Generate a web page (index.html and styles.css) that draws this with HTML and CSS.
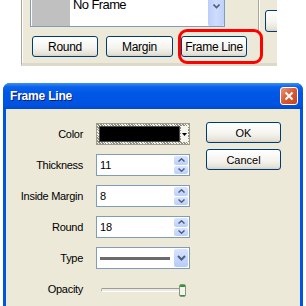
FILE: index.html
```html
<!DOCTYPE html>
<html lang="en">
<head>
    <meta charset="UTF-8">
    <title>Frame Line</title>
    <link rel="stylesheet" href="styles.css">
</head>
<body>
    <!-- Cropped view of the frame panel -->
    <div class="snippet">
        <div class="snippet-inner">
            <div class="list-row">
                <div class="list-box">
                    <div class="list-thumb"></div>
                    <div class="list-text">No Frame</div>
                    <div class="list-scroll">
                        <svg width="7" height="5" viewBox="0 0 7 5"><path d="M0.5 0.5 L3.5 3.5 L6.5 0.5" fill="none" stroke="#4d6185" stroke-width="1.6"/></svg>
                    </div>
                </div>
                <div class="divider"></div>
                <button class="xp-btn side-btn"></button>
            </div>
            <div class="btn-row">
                <button class="xp-btn top-btn">Round</button>
                <button class="xp-btn top-btn margin-btn">Margin</button>
                <button class="xp-btn top-btn">Frame Line</button>
            </div>
        </div>
        <span class="highlight"></span>
    </div>

    <!-- Frame Line dialog -->
    <div class="dialog">
        <div class="titlebar">
            <span class="title">Frame Line</span>
            <button class="close">
                <svg width="10" height="10" viewBox="0 0 10 10"><path d="M1.5 1.5 L8.5 8.5 M8.5 1.5 L1.5 8.5" stroke="#fff" stroke-width="2"/></svg>
            </button>
        </div>
        <div class="dialog-body">
            <div class="form">
                <label>Color</label>
                <div class="color-pick">
                    <div class="swatch"></div>
                    <div class="swatch-arrow">
                        <svg width="5" height="3" viewBox="0 0 5 3"><path d="M0 0 H5 L2.5 3 Z" fill="#000"/></svg>
                    </div>
                </div>

                <label>Thickness</label>
                <div class="spin">
                    <span class="spin-value">11</span>
                    <div class="spin-btns">
                        <span class="spin-btn"><svg width="7" height="4" viewBox="0 0 7 4"><path d="M0.5 3.5 L3.5 0.8 L6.5 3.5" fill="none" stroke="#4d6185" stroke-width="1.5"/></svg></span>
                        <span class="spin-btn"><svg width="7" height="4" viewBox="0 0 7 4"><path d="M0.5 0.5 L3.5 3.2 L6.5 0.5" fill="none" stroke="#4d6185" stroke-width="1.5"/></svg></span>
                    </div>
                </div>

                <label>Inside Margin</label>
                <div class="spin">
                    <span class="spin-value">8</span>
                    <div class="spin-btns">
                        <span class="spin-btn"><svg width="7" height="4" viewBox="0 0 7 4"><path d="M0.5 3.5 L3.5 0.8 L6.5 3.5" fill="none" stroke="#4d6185" stroke-width="1.5"/></svg></span>
                        <span class="spin-btn"><svg width="7" height="4" viewBox="0 0 7 4"><path d="M0.5 0.5 L3.5 3.2 L6.5 0.5" fill="none" stroke="#4d6185" stroke-width="1.5"/></svg></span>
                    </div>
                </div>

                <label>Round</label>
                <div class="spin">
                    <span class="spin-value">18</span>
                    <div class="spin-btns">
                        <span class="spin-btn"><svg width="7" height="4" viewBox="0 0 7 4"><path d="M0.5 3.5 L3.5 0.8 L6.5 3.5" fill="none" stroke="#4d6185" stroke-width="1.5"/></svg></span>
                        <span class="spin-btn"><svg width="7" height="4" viewBox="0 0 7 4"><path d="M0.5 0.5 L3.5 3.2 L6.5 0.5" fill="none" stroke="#4d6185" stroke-width="1.5"/></svg></span>
                    </div>
                </div>

                <label>Type</label>
                <div class="select">
                    <div class="line-sample"></div>
                    <span class="drop-btn">
                        <svg width="9" height="6" viewBox="0 0 9 6"><path d="M1 1 L4.5 4.5 L8 1" fill="none" stroke="#4d6185" stroke-width="2"/></svg>
                    </span>
                </div>

                <label>Opacity</label>
                <div class="slider">
                    <div class="slider-track"></div>
                    <span class="slider-thumb"></span>
                </div>
            </div>

            <div class="actions">
                <button class="xp-btn dlg-btn">OK</button>
                <button class="xp-btn dlg-btn">Cancel</button>
            </div>
        </div>
    </div>
</body>
</html>
```

FILE: styles.css
```css
* {
    box-sizing: border-box;
}

body {
    margin: 0;
    width: 306px;
    height: 306px;
    overflow: hidden;
    background-color: #fff;
    font-family: "Liberation Sans", Arial, sans-serif;
    font-size: 11px;
    color: #000;
}

/* ---- cropped panel on top ---- */

.snippet {
    position: relative;
    margin-left: 21px;
    width: 256px;
}

.snippet-inner {
    height: 66px;
    padding-left: 8px;
    background-color: #ece9d8;
    border-left: 1px solid #aca899;
    border-bottom: 3px solid #dcd9cc;
    box-shadow: inset 1px 0 #fff;
    overflow: hidden;
}

.list-row {
    display: flex;
    align-items: flex-start;
    margin-top: -10px;
}

.list-row > * {
    flex-shrink: 0;
}

.list-box {
    display: flex;
    width: 195px;
    height: 37px;
    background-color: #fff;
    border: 1px solid #7f9db9;
}

.list-thumb {
    width: 38px;
    margin-left: 1px;
    background-color: #c0c0c0;
}

.list-text {
    flex: 1;
    padding: 7px 0 0 3px;
    font-size: 13px;
    line-height: 13px;
    letter-spacing: -0.6px;
}

.list-scroll {
    width: 16px;
    padding-top: 13px;
    display: flex;
    justify-content: center;
    align-items: flex-start;
    background: linear-gradient(90deg, #bccdf9, #cfdcfd 50%, #bfd0fa);
    border-radius: 2px;
}

.divider {
    width: 1px;
    height: 43px;
    margin-left: 33px;
    background-color: #aca899;
    box-shadow: 1px 0 #fff;
}

.xp-btn {
    padding: 0;
    height: 21px;
    border: 1px solid #003c74;
    border-radius: 3px;
    background: linear-gradient(#fff, #f5f4ef 55%, #e6e3d8 88%, #d6d0c5);
    font-family: "Liberation Sans", Arial, sans-serif;
    color: #000;
}

.side-btn {
    width: 30px;
    height: 22px;
    margin: 20px 0 0 6px;
}

.btn-row {
    display: flex;
    gap: 8px;
    margin-top: 3px;
    padding-left: 2px;
}

.top-btn {
    width: 66px;
    font-size: 12px;
    letter-spacing: -0.3px;
}

.margin-btn {
    width: 67px;
}

.highlight {
    position: absolute;
    left: 157px;
    top: 29px;
    width: 85px;
    height: 35px;
    border: 3px solid #f00;
    border-radius: 9px;
}

/* ---- dialog ---- */

.dialog {
    display: flex;
    flex-direction: column;
    width: 300px;
    height: 223px;
    margin: 17px 0 0 3px;
    background-color: #0054e3;
    border-radius: 7px 7px 0 0;
}

.titlebar {
    display: flex;
    align-items: center;
    height: 26px;
    padding: 0 5px 0 7px;
    background: linear-gradient(#3d8ffa 0, #0b62ea 4px, #0057e6 40%, #0053e1 85%, #0048cc);
    border-radius: 7px 7px 0 0;
    color: #fff;
}

.title {
    flex: 1;
    font-size: 12px;
    font-weight: bold;
    letter-spacing: -0.2px;
    text-shadow: 1px 1px #0a1a6e;
}

.close {
    display: flex;
    align-items: center;
    justify-content: center;
    width: 18px;
    height: 18px;
    padding: 0;
    border: 1px solid #fff;
    border-radius: 3px;
    background: linear-gradient(135deg, #eb9474, #d85a33 50%, #c5431c);
}

.dialog-body {
    flex: 1;
    display: flex;
    align-items: flex-start;
    margin: 0 3px;
    padding-top: 14px;
    background-color: #ece9d8;
}

.form {
    display: grid;
    grid-template-columns: 77px 94px;
    grid-auto-rows: 22px;
    column-gap: 13px;
    row-gap: 9px;
    align-items: center;
}

.form label {
    text-align: right;
    letter-spacing: -0.3px;
}

.color-pick {
    display: flex;
    height: 22px;
    padding: 2px 1px 2px 2px;
    border: 1px solid #9e9b8d;
    background: repeating-linear-gradient(45deg, #8f8c80 0 1px, #f4f3ee 1px 2px);
}

.swatch {
    flex: 1;
    background-color: #000;
    border: 1px solid #4a4a4a;
}

.swatch-arrow {
    display: flex;
    align-items: center;
    justify-content: center;
    width: 7px;
    margin-left: 1px;
    background-color: #f5f4ee;
}

.spin {
    display: flex;
    height: 22px;
    background-color: #fff;
    border: 1px solid #7f9db9;
}

.spin-value {
    flex: 1;
    padding-left: 3px;
    line-height: 20px;
}

.spin-btns {
    display: flex;
    flex-direction: column;
    gap: 1px;
    width: 15px;
    padding: 1px 1px 1px 0;
}

.spin-btn {
    flex: 1;
    display: flex;
    align-items: center;
    justify-content: center;
    background: linear-gradient(#dae5fd, #bccff9);
    border-radius: 2px;
}

.select {
    display: flex;
    align-items: center;
    height: 22px;
    padding: 1px;
    background-color: #fff;
    border: 1px solid #7f9db9;
}

.line-sample {
    flex: 1;
    height: 3px;
    margin: 0 4px 0 2px;
    background-color: #6b6b6b;
}

.drop-btn {
    display: flex;
    align-items: center;
    justify-content: center;
    width: 14px;
    height: 18px;
    background: linear-gradient(#d9e4fd, #b6cbf8);
    border-radius: 2px;
}

.slider {
    position: relative;
    height: 22px;
}

.slider-track {
    width: 82px;
    height: 4px;
    margin: 10px 0 0 5px;
    background-color: #ebeae3;
    border-top: 1px solid #9d9c99;
    border-bottom: 1px solid #fff;
    border-left: 1px solid #b5b3aa;
    border-radius: 1px;
}

.slider-thumb {
    position: absolute;
    left: 83px;
    top: 6px;
    width: 7px;
    height: 13px;
    border: 1px solid #8e8f8f;
    border-radius: 2px;
    background: linear-gradient(#21a121 0 2px, #f5f4ea 2px 10px, #21a121 10px);
}

.actions {
    display: flex;
    flex-direction: column;
    gap: 6px;
    margin: -1px 0 0 16px;
}

.dlg-btn {
    width: 75px;
    font-size: 11px;
}
```
